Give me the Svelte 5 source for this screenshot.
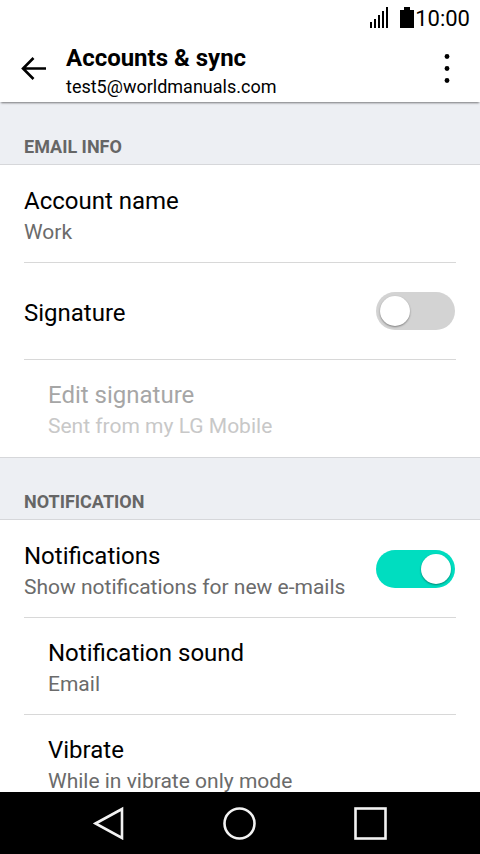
<script lang="ts">
  let signature = $state(false);
  let notifications = $state(true);

  const bars = [6, 9, 13, 17, 21];
</script>

<div class="screen">
  <div class="status">
    <svg width="20" height="22" viewBox="0 0 20 22" aria-hidden="true">
      {#each bars as h, i}
        <rect x={i * 4} y={21 - h} width="2" height={h} />
      {/each}
    </svg>
    <svg class="battery" width="14" height="22" viewBox="0 0 14 22" aria-hidden="true">
      <path d="M4 0h6v3h4v18H0V3h4z" />
    </svg>
    <span class="clock">10:00</span>
  </div>

  <header>
    <button class="icon back" aria-label="Back">
      <svg width="26" height="24" viewBox="0 0 26 24">
        <path d="M13.5 1 3 11.5 13.5 22M3 11.5H26" fill="none" stroke="#000" stroke-width="2.6" />
      </svg>
    </button>
    <div class="heading">
      <h1>Accounts &amp; sync</h1>
      <p>test5@worldmanuals.com</p>
    </div>
    <button class="icon more" aria-label="More options">
      <svg width="6" height="30" viewBox="0 0 6 30">
        <circle cx="3" cy="2.5" r="2.4" />
        <circle cx="3" cy="14.5" r="2.4" />
        <circle cx="3" cy="26.5" r="2.4" />
      </svg>
    </button>
  </header>

  <main>
    <section>
      <h2>EMAIL INFO</h2>
      <button class="row">
        <span class="text">
          <span class="title">Account name</span>
          <span class="summary">Work</span>
        </span>
      </button>
      <label class="row">
        <span class="text">
          <span class="title">Signature</span>
        </span>
        <input class="switch" type="checkbox" bind:checked={signature} />
      </label>
      <button class="row sub" disabled={!signature}>
        <span class="text">
          <span class="title">Edit signature</span>
          <span class="summary">Sent from my LG Mobile</span>
        </span>
      </button>
    </section>

    <section>
      <h2>NOTIFICATION</h2>
      <label class="row">
        <span class="text">
          <span class="title">Notifications</span>
          <span class="summary">Show notifications for new e-mails</span>
        </span>
        <input class="switch" type="checkbox" bind:checked={notifications} />
      </label>
      <button class="row sub" disabled={!notifications}>
        <span class="text">
          <span class="title">Notification sound</span>
          <span class="summary">Email</span>
        </span>
      </button>
      <button class="row sub" disabled={!notifications}>
        <span class="text">
          <span class="title">Vibrate</span>
          <span class="summary">While in vibrate only mode</span>
        </span>
      </button>
    </section>
  </main>

  <nav>
    <button class="icon" aria-label="Back">
      <svg width="34" height="34" viewBox="0 0 34 34">
        <path d="M3.5 17.5 30 3v29z" />
      </svg>
    </button>
    <button class="icon" aria-label="Home">
      <svg width="34" height="34" viewBox="0 0 34 34">
        <circle cx="16.5" cy="17.5" r="15" />
      </svg>
    </button>
    <button class="icon" aria-label="Recent apps">
      <svg width="34" height="34" viewBox="0 0 34 34">
        <rect x="1.5" y="2.5" width="30" height="30" />
      </svg>
    </button>
  </nav>
</div>

<style>
  :global(body) {
    margin: 0;
    background: #fff;
  }

  .screen {
    display: flex;
    flex-direction: column;
    height: 100vh;
    background: #fff;
    color: #000;
    font-family: Roboto, 'Noto Sans', sans-serif;
  }

  h1,
  h2,
  p {
    margin: 0;
  }

  svg {
    display: block;
  }

  button {
    border: none;
    background: none;
    color: inherit;
    font-family: inherit;
    text-align: left;
    padding: 0;
  }

  .icon {
    display: flex;
    align-items: center;
    justify-content: center;
  }

  .status {
    display: flex;
    align-items: center;
    justify-content: flex-end;
    height: 36px;
    padding-right: 10px;
    flex-shrink: 0;
  }

  .battery {
    margin-left: 10px;
  }

  .clock {
    margin-left: 1px;
    padding-top: 2px;
    font-size: 22px;
    line-height: 34px;
  }

  header {
    display: flex;
    align-items: center;
    height: 66px;
    flex-shrink: 0;
    position: relative;
    box-shadow: 0 2px 2px -1px rgba(0, 0, 0, 0.5);
  }

  .back {
    width: 66px;
    height: 64px;
  }

  .heading {
    flex: 1;
    min-width: 0;
    padding-top: 4px;
  }

  h1 {
    font-size: 24px;
    line-height: 32px;
    font-weight: 700;
  }

  .heading p {
    font-size: 18px;
    line-height: 26px;
  }

  .more {
    width: 66px;
    height: 64px;
  }

  main {
    flex: 1;
    min-height: 0;
    overflow-y: auto;
    scrollbar-width: none;
  }

  h2 {
    box-sizing: border-box;
    height: 63px;
    padding: 33px 24px 0;
    border-bottom: 1px solid #d6d7da;
    background: #edeff3;
    color: #666;
    font-size: 18px;
    line-height: 24px;
    font-weight: 700;
  }

  section + section h2 {
    box-shadow: inset 0 1px #d6d7da;
  }

  .row {
    display: flex;
    align-items: center;
    box-sizing: border-box;
    width: calc(100% - 48px);
    min-height: 97px;
    margin: 0 24px;
    border-bottom: 1px solid #d8d8d8;
  }

  h2 + .row {
    min-height: 98px;
  }

  .row.sub {
    padding-left: 24px;
  }

  .row:last-child {
    border-bottom-color: transparent;
  }

  .text {
    display: flex;
    flex-direction: column;
    flex: 1;
    min-width: 0;
    padding-top: 4px;
  }

  .title {
    font-size: 24px;
    line-height: 32px;
  }

  .summary {
    color: #6b6b6b;
    font-size: 21px;
    line-height: 30px;
  }

  .row:disabled .title {
    color: #a6a6a6;
  }

  .row:disabled .summary {
    color: #c8c8c8;
  }

  .switch {
    appearance: none;
    display: flex;
    flex-shrink: 0;
    box-sizing: border-box;
    width: 79px;
    height: 38px;
    margin: 0 1px 0 0;
    padding: 4px;
    border-radius: 19px;
    background: #d3d3d3;
  }

  .switch::before {
    content: '';
    width: 30px;
    height: 30px;
    border-radius: 50%;
    background: #fff;
    box-shadow: 0 1px 2px rgba(0, 0, 0, 0.4);
  }

  .switch:checked {
    justify-content: flex-end;
    background: #00ddc0;
  }

  nav {
    display: flex;
    align-items: center;
    justify-content: center;
    gap: 97px;
    height: 62px;
    flex-shrink: 0;
    background: #000;
  }

  nav svg {
    fill: none;
    stroke: #f2f2f2;
    stroke-width: 2.6;
  }
</style>
